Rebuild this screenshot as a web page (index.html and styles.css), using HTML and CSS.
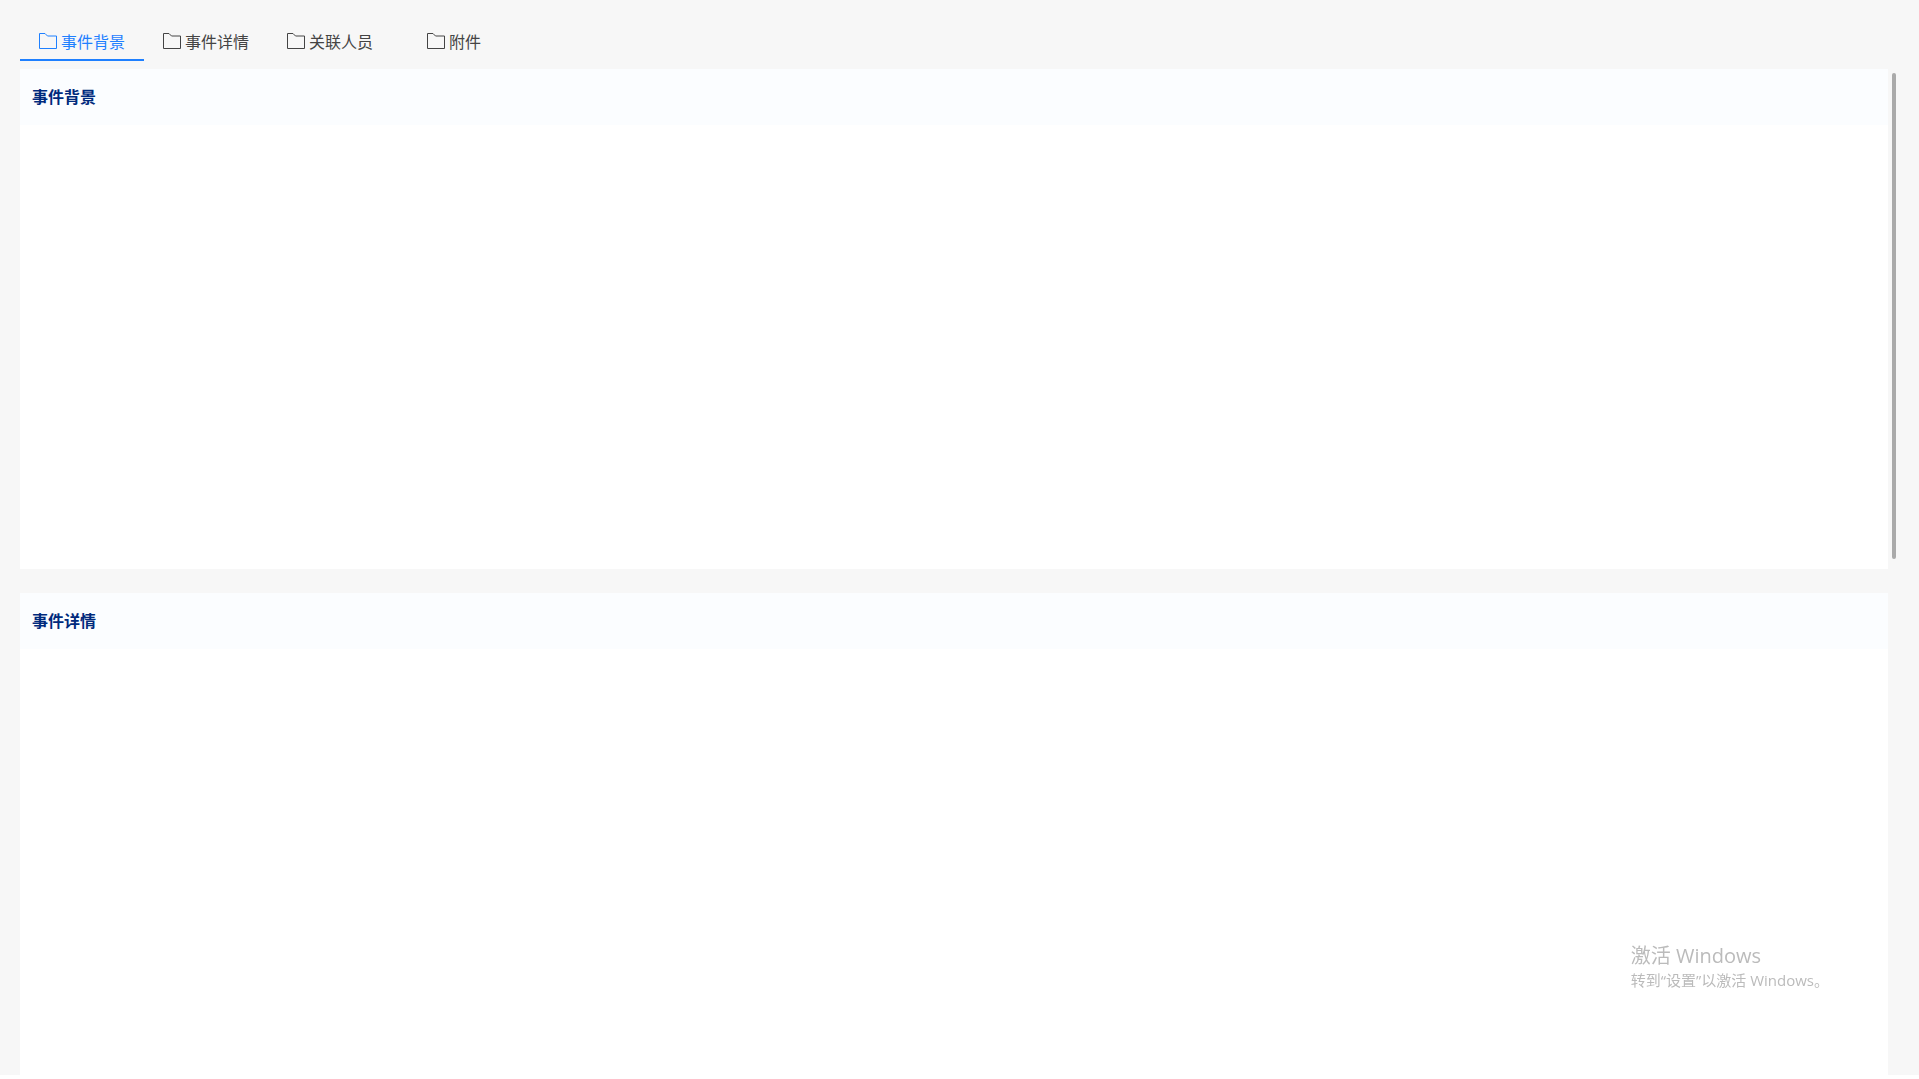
FILE: index.html
```html
<!DOCTYPE html>
<html lang="zh-CN">
<head>
    <meta charset="UTF-8">
    <meta name="viewport" content="width=device-width, initial-scale=1.0">
    <title>事件背景</title>
    <link rel="stylesheet" href="styles.css">
</head>
<body>
    <svg class="sprite" aria-hidden="true">
        <symbol id="folder" viewBox="0 0 18 16">
            <path d="M0.5 0.5H6L8.5 3H17.5V15.5H0.5Z" fill="none" stroke="currentColor"/>
        </symbol>
    </svg>

    <div class="page">
        <nav class="tabs">
            <button type="button" class="tab active"><svg class="icon"><use href="#folder"/></svg>事件背景</button>
            <button type="button" class="tab"><svg class="icon"><use href="#folder"/></svg>事件详情</button>
            <button type="button" class="tab"><svg class="icon"><use href="#folder"/></svg>关联人员</button>
            <button type="button" class="tab"><svg class="icon"><use href="#folder"/></svg>附件</button>
        </nav>

        <main class="content">
            <section class="card">
                <h2 class="card-title">事件背景</h2>
            </section>
            <section class="card">
                <h2 class="card-title">事件详情</h2>
            </section>
            <div class="scroll-thumb"></div>
        </main>
    </div>

    <div class="watermark">
        <p class="watermark-title">激活 Windows</p>
        <p class="watermark-text">转到“设置”以激活 Windows。</p>
    </div>
</body>
</html>
```
FILE: styles.css
```css
* {
    box-sizing: border-box;
}

body {
    margin: 0;
    background-color: #fff;
    font-family: "Open Sans", "Noto Sans CJK SC", sans-serif;
    font-size: 16px;
    overflow: hidden;
}

.sprite {
    position: absolute;
    width: 0;
    height: 0;
}

.page {
    display: flex;
    flex-direction: column;
    height: calc(100vh - 4px);
    padding: 24px 20px 0;
    background-color: #f7f7f7;
}

.tabs {
    display: flex;
    flex: none;
    margin-bottom: 8px;
}

.tab {
    display: flex;
    align-items: center;
    justify-content: center;
    gap: 4px;
    width: 124px;
    height: 37px;
    padding: 0;
    border: none;
    border-bottom: 2px solid transparent;
    background: none;
    color: #444;
    font-family: inherit;
    font-size: 16px;
    line-height: 24px;
    cursor: pointer;
}

.tab.active {
    color: #1f80ff;
    border-bottom-color: #1f80ff;
}

.icon {
    width: 18px;
    height: 16px;
    margin-bottom: 2px;
}

.content {
    position: relative;
    flex: 1;
    min-height: 0;
    padding-right: 11px;
    overflow: hidden;
}

.card {
    height: 500px;
    margin-bottom: 24px;
    background-color: #fff;
}

.card-title {
    margin: 0;
    padding: 16px 12px;
    background-color: #fbfdff;
    color: #002a7c;
    font-size: 16px;
    font-weight: bold;
    line-height: 24px;
}

/* scrollbar thumb over the right gutter */
.scroll-thumb {
    position: absolute;
    top: 4px;
    right: 3px;
    width: 4px;
    height: 486px;
    border-radius: 2px;
    background-color: #aaa;
}

.watermark {
    position: fixed;
    right: 90px;
    bottom: 87px;
    color: #bbb;
    pointer-events: none;
}

.watermark p {
    margin: 0;
}

.watermark-title {
    font-size: 20px;
    line-height: 24px;
}

.watermark-text {
    font-size: 15px;
    line-height: 24px;
}
```
